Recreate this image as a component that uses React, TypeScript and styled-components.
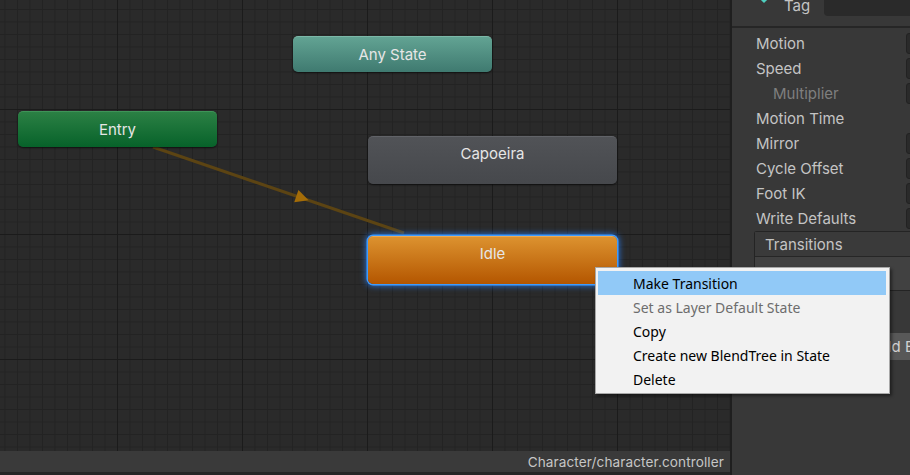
import styled, { createGlobalStyle, css } from "styled-components";

const GlobalStyle = createGlobalStyle`
  html, body {
    margin: 0;
    padding: 0;
    background: #383838;
    overflow: hidden;
  }
  #root {
    width: 910px;
    height: 475px;
  }
`

const Window = styled.div`
  position: relative;
  display: flex;
  width: 910px;
  height: 475px;
  font-family: Inter, "Noto Sans", sans-serif;
  overflow: hidden;
`

// ---------- graph side ----------
const GraphColumn = styled.div`
  display: flex;
  flex-direction: column;
  width: 730px;
  flex-shrink: 0;
  border-bottom: 3px solid #262626;
`
const Graph = styled.div`
  position: relative;
  flex: 1;
  overflow: hidden;
  background-color: #2a2a2a;
  background-image:
    linear-gradient(to right, #1b1b1b 1px, transparent 1px),
    linear-gradient(to bottom, #1b1b1b 1px, transparent 1px),
    linear-gradient(to right, #232323 1px, transparent 1px),
    linear-gradient(to bottom, #232323 1px, transparent 1px);
  background-size: 125px 125px, 125px 125px, 12.5px 12.5px, 12.5px 12.5px;
  background-position: 117px 109px, 117px 109px, 4.5px 9px, 4.5px 9px;
`
const StatusBar = styled.div`
  display: flex;
  align-items: center;
  justify-content: flex-end;
  height: 21px;
  padding-right: 6px;
  background: #3a3a3a;
  color: #c6c6c6;
  font-size: 13.6px;
  letter-spacing: 0.1px;
`

type Kind = "any" | "entry" | "plain" | "selected";

const kinds = {
  any: css`
    background: linear-gradient(to bottom, #62a393, #3f7a70);
    border-top: 1px solid #7cb8a8;
  `,
  entry: css`
    background: linear-gradient(to bottom, #2b8044, #07622a);
    border-top: 1px solid #3e9458;
  `,
  plain: css`
    background: linear-gradient(to bottom, #515357, #46484c);
    border-top: 1px solid #616368;
  `,
  selected: css`
    background: linear-gradient(to bottom, #dc922f, #b45600);
    border-top: 1px solid #eaa955;
    box-shadow: 0 0 0 1.5px #3e9bff, 0 0 6px 2px rgba(40, 130, 255, 0.8);
  `,
}

const StateNode = styled.div<{ $x: number; $y: number; $w: number; $h: number; $kind: Kind; $tall?: boolean }>`
  position: absolute;
  left: ${(p) => p.$x}px;
  top: ${(p) => p.$y}px;
  width: ${(p) => p.$w}px;
  height: ${(p) => p.$h}px;
  box-sizing: border-box;
  border-radius: 5px;
  display: flex;
  justify-content: center;
  align-items: ${(p) => (p.$tall ? "flex-start" : "center")};
  padding-top: ${(p) => (p.$tall ? "7px" : "0")};
  color: #e6e6e6;
  font-size: 15px;
  box-shadow: 0 1px 2px rgba(0, 0, 0, 0.6);
  ${(p) => kinds[p.$kind]}
`

const Wire = styled.svg`
  position: absolute;
  left: 0;
  top: 0;
  width: 100%;
  height: 100%;
  pointer-events: none;
`

// ---------- context menu ----------
const Menu = styled.div`
  position: absolute;
  left: 595px;
  top: 267px;
  width: 295px;
  box-sizing: border-box;
  padding: 3px 3px 2px 2px;
  background: #f2f2f2;
  border: 1px solid #a8a8a8;
  box-shadow: 2px 2px 3px rgba(0, 0, 0, 0.45);
  font-family: "Noto Sans", "Open Sans", sans-serif;
  font-size: 14px;
  z-index: 5;
`
const MenuItem = styled.div<{ $active?: boolean; $disabled?: boolean }>`
  height: 24px;
  display: flex;
  align-items: center;
  padding-left: 35px;
  color: ${(p) => (p.$disabled ? "#6d6d6d" : "#000")};
  background: ${(p) => (p.$active ? "#91c9f7" : "transparent")};
`

// ---------- inspector ----------
const Inspector = styled.div`
  flex: 1;
  display: flex;
  flex-direction: column;
  background: #383838;
  border-left: 2px solid #1f1f1f;
  overflow: hidden;
  color: #c4c4c4;
  font-size: 15px;
`
const HeaderRow = styled.div`
  display: flex;
  align-items: flex-start;
  height: 26px;
  border-bottom: 2px solid #262626;
  margin-bottom: 3px;
`
const HeaderIcon = styled.div`
  width: 10px;
  height: 10px;
  margin: -9px 0 0 27px;
  background: #4fd0c0;
  transform: rotate(45deg);
`
const TagLabel = styled.div`
  margin: -4px 0 0 15px;
  line-height: 20px;
`
const TagField = styled.div`
  flex: 1;
  height: 16px;
  margin-left: 14px;
  background: #2a2a2a;
  border-bottom-left-radius: 4px;
`
const FieldRow = styled.div`
  display: grid;
  grid-template-columns: 150px 100px;
  align-items: center;
  height: 25px;
  padding-left: 24px;
`
const Label = styled.div<{ $sub?: boolean }>`
  padding-left: ${(p) => (p.$sub ? "17px" : "0")};
  color: ${(p) => (p.$sub ? "#7f7f7f" : "#c4c4c4")};
  white-space: nowrap;
`
const FieldBox = styled.div`
  height: 19px;
  background: #2a2a2a;
  border: 1px solid #222;
  border-radius: 3px;
`
const TransitionsBox = styled.div`
  margin: 0 0 0 22px;
  border: 1px solid #242424;
  border-right: none;
  border-top-left-radius: 3px;
  width: 200px;
`
const TransitionsHead = styled.div`
  height: 24px;
  display: flex;
  align-items: center;
  padding-left: 10px;
  background: #3a3a3a;
  border-bottom: 1px solid #262626;
`
const TransitionsList = styled.div`
  height: 33px;
  background: #414141;
`
const AddButton = styled.div`
  margin: 42px 0 0 130px;
  width: 160px;
  height: 27px;
  display: flex;
  align-items: center;
  padding-left: 10px;
  background: #585858;
  border-radius: 3px;
  color: #d2d2d2;
  white-space: nowrap;
`

const fields: { label: string; sub?: boolean; box: boolean }[] = [
  { label: "Motion", box: true },
  { label: "Speed", box: true },
  { label: "Multiplier", sub: true, box: true },
  { label: "Motion Time", box: false },
  { label: "Mirror", box: true },
  { label: "Cycle Offset", box: true },
  { label: "Foot IK", box: true },
  { label: "Write Defaults", box: true },
]

const menuItems = [
  { text: "Make Transition", active: true },
  { text: "Set as Layer Default State", disabled: true },
  { text: "Copy" },
  { text: "Create new BlendTree in State" },
  { text: "Delete" },
]

const Arrow = () => {
  // transition from Entry down to Idle
  const x1 = 153, y1 = 147, x2 = 404, y2 = 233
  const ang = (Math.atan2(y2 - y1, x2 - x1) * 180) / Math.PI
  return (
    <Wire>
      <line x1={x1} y1={y1} x2={x2} y2={y2} stroke="#5c4413" strokeWidth={3} />
      <polygon points="7,0 -6,-6.5 -6,6.5" fill="#a36c08" transform={`translate(302 198) rotate(${ang})`} />
    </Wire>
  )
}

const App = () => {
  return (
    <Window>
      <GlobalStyle />
      <GraphColumn>
        <Graph>
          <Arrow />
          <StateNode $x={293} $y={36} $w={199} $h={36} $kind="any">Any State</StateNode>
          <StateNode $x={18} $y={111} $w={199} $h={36} $kind="entry">Entry</StateNode>
          <StateNode $x={368} $y={136} $w={249} $h={48} $kind="plain" $tall>Capoeira</StateNode>
          <StateNode $x={368} $y={236} $w={249} $h={48} $kind="selected" $tall>Idle</StateNode>
        </Graph>
        <StatusBar>Character/character.controller</StatusBar>
      </GraphColumn>
      <Inspector>
        <HeaderRow>
          <HeaderIcon />
          <TagLabel>Tag</TagLabel>
          <TagField />
        </HeaderRow>
        {fields.map((f) => (
          <FieldRow key={f.label}>
            <Label $sub={f.sub}>{f.label}</Label>
            {f.box ? <FieldBox /> : <span />}
          </FieldRow>
        ))}
        <TransitionsBox>
          <TransitionsHead>Transitions</TransitionsHead>
          <TransitionsList />
        </TransitionsBox>
        <AddButton>Add Behaviour</AddButton>
      </Inspector>
      <Menu>
        {menuItems.map((m) => (
          <MenuItem key={m.text} $active={m.active} $disabled={m.disabled}>{m.text}</MenuItem>
        ))}
      </Menu>
    </Window>
  )
}
export default App
